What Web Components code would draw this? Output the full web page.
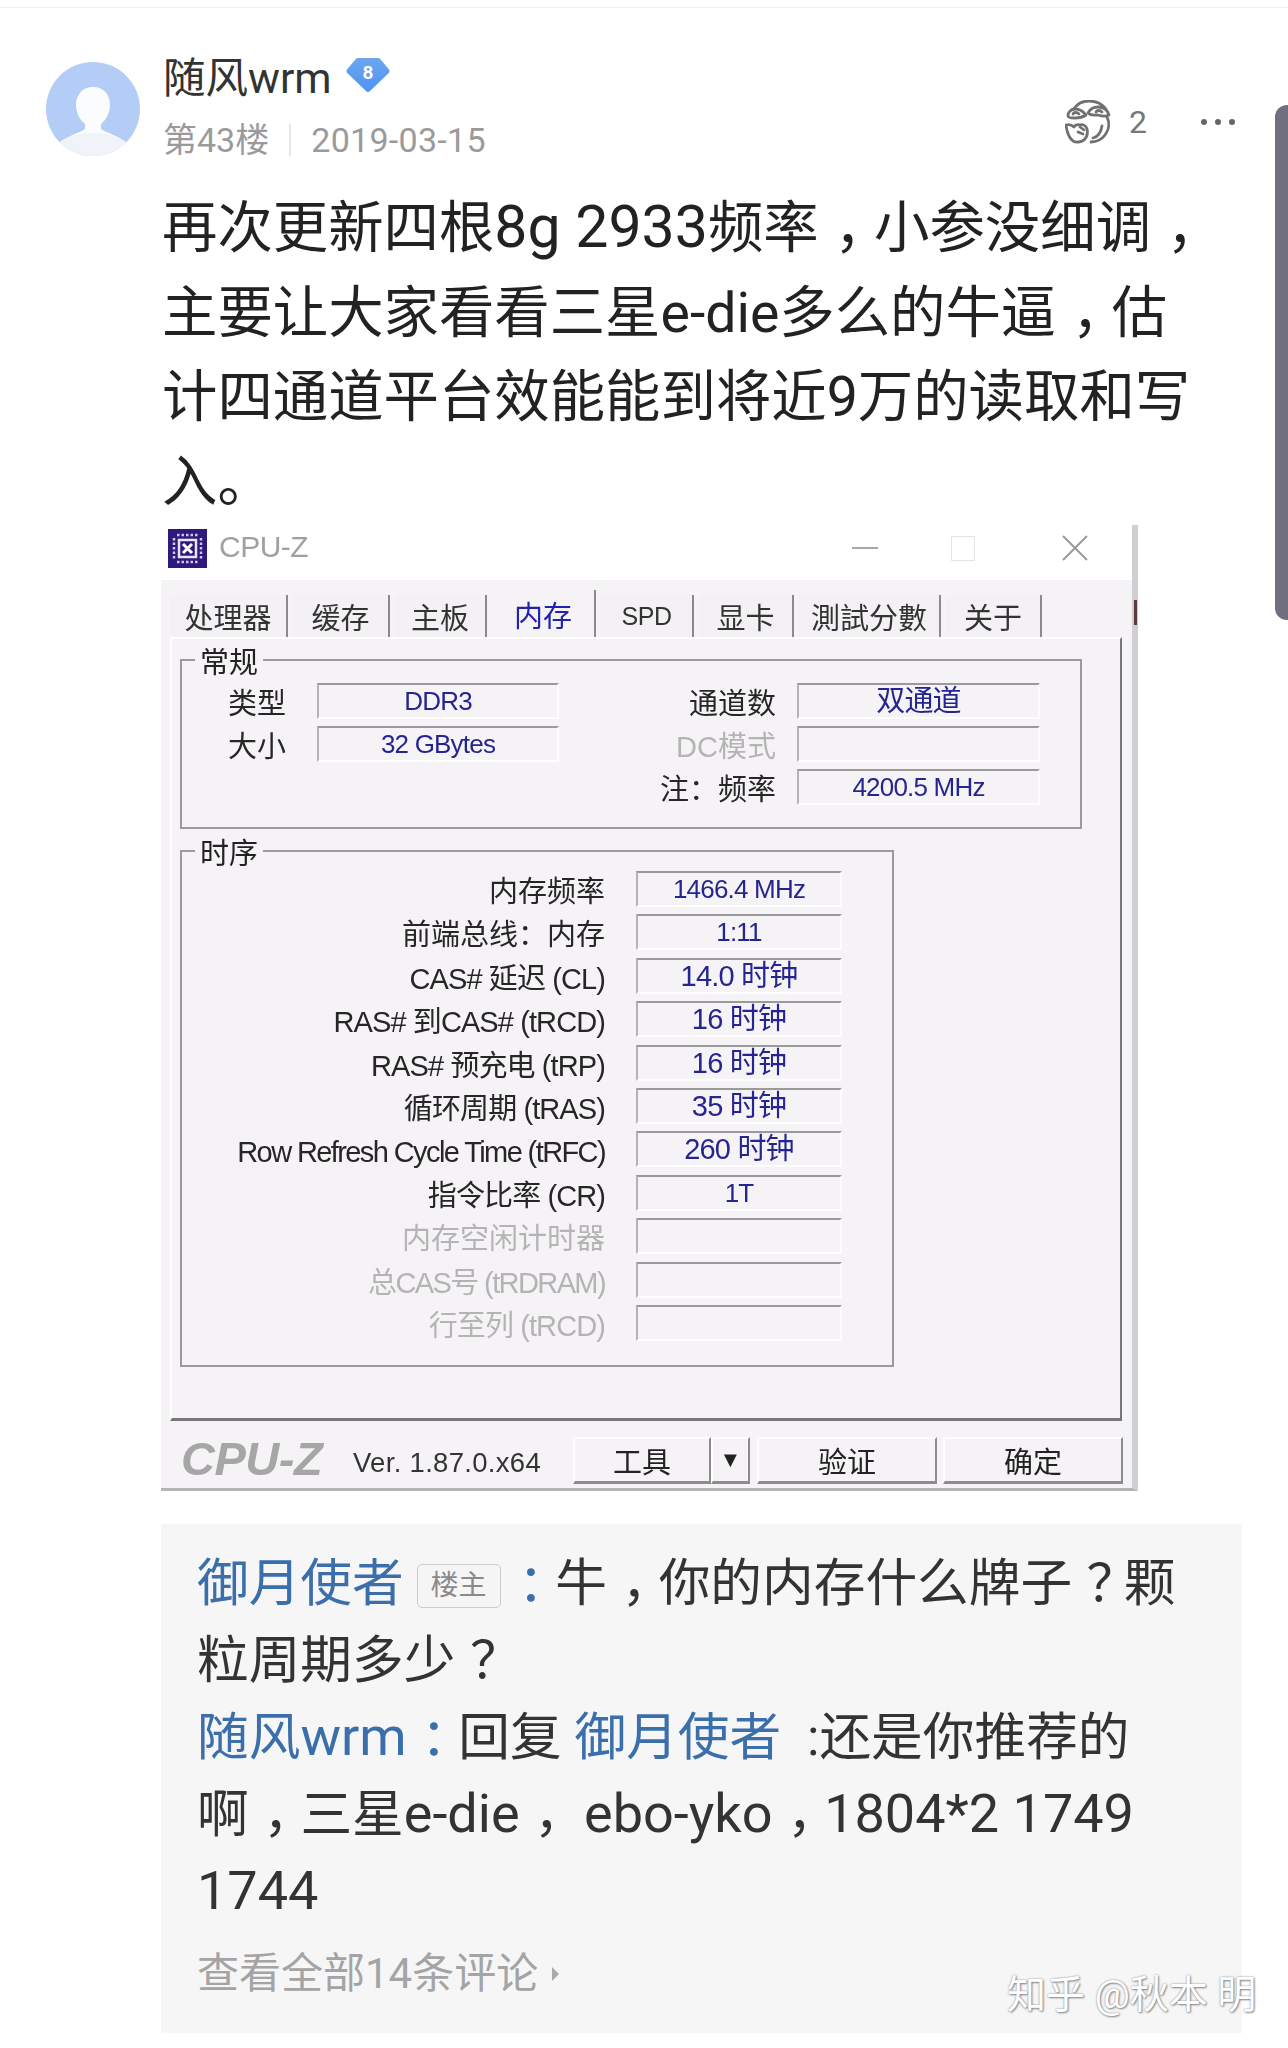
<!DOCTYPE html>
<html lang="zh">
<head>
<meta charset="utf-8">
<title>评论</title>
<style>
  html, body { margin: 0; background: #fff; }
  body { height: 2048px; overflow: hidden; font-family: Roboto, "Noto Sans CJK SC", sans-serif; }
  zh-comments a { color: #3b6fab; }
  .lat { font-size: 54px; line-height: 1; }
  zh-post-text .lat { font-size: 59px; }
</style>
</head>
<body>
<zh-page>
  <zh-post-header slot="header" name="随风wrm" level="8" floor="第43楼" date="2019-03-15" likes="2"></zh-post-header>
  <zh-post-text>再次更新四根<span class="lat">8g 2933</span>频率<zh-pun>，</zh-pun>小参没细调<zh-pun>，</zh-pun>主要让大家看看三星e-die多么的牛逼<zh-pun>，</zh-pun>估计四通道平台效能能到将近9万的读取和写入。</zh-post-text>
  <cz-window></cz-window>
  <zh-comments more="查看全部14条评论">
    <p><a>御月使者</a> <zh-tag>楼主</zh-tag><a><zh-pun>：</zh-pun></a>牛<zh-pun>，</zh-pun>你的内存什么牌子<zh-pun>？</zh-pun>颗粒周期多少<zh-pun>？</zh-pun></p>
    <p><a>随风<span class="lat">wrm</span><zh-pun>：</zh-pun></a>回复 <a>御月使者</a> &nbsp;:还是你推荐的<br>啊<zh-pun>，</zh-pun>三星<span class="lat">e-die</span><zh-pun>，</zh-pun> <span class="lat">ebo-yko</span><zh-pun>，</zh-pun><span class="lat">1804*2 1749 1744</span></p>
  </zh-comments>
</zh-page>

<script>
const CZ_FONT = `"Liberation Sans", "Noto Sans CJK SC", sans-serif`;

class ZhPage extends HTMLElement {
  constructor() {
    super();
    this.attachShadow({ mode: "open" });
    this.shadowRoot.innerHTML = `
      <style>
        :host { display: block; position: relative; height: 2048px; overflow: hidden; color: #222; }
        .rule { height: 8px; border-bottom: 1px solid #eeeeee; box-sizing: border-box; }
        .scroll {
          position: absolute; right: 0; top: 105px; width: 13px; height: 515px;
          background: #6f6f7d; border-radius: 12px 0 0 12px;
        }
        .mark {
          position: absolute; left: 1007px; top: 1970px; font-size: 39px; line-height: 50px;
          color: #fff; text-shadow: 0 0 2px #888, 1px 1px 2px #888; white-space: nowrap;
        }
      </style>
      <div class="rule"></div>
      <slot name="header"></slot>
      <slot></slot>
      <div class="scroll"></div>
      <div class="mark">知乎 @秋本 明</div>
    `;
  }
}

// centred full-width punctuation, the app's font does not sit it at the left of the cell
class ZhPun extends HTMLElement {
  constructor() {
    super();
    this.attachShadow({ mode: "open" });
    this.shadowRoot.innerHTML = `
      <style>
        :host { display: inline-block; transform: translateX(0.28em); }
      </style>
      <slot></slot>
    `;
  }
}

class ZhPostHeader extends HTMLElement {
  constructor() {
    super();
    this.attachShadow({ mode: "open" });
  }

  connectedCallback() {
    const name = this.getAttribute("name") || "";
    const level = this.getAttribute("level") || "";
    const floor = this.getAttribute("floor") || "";
    const date = this.getAttribute("date") || "";
    const likes = this.getAttribute("likes") || "";
    this.shadowRoot.innerHTML = `
      <style>
        :host { display: flex; padding: 46px 0 0 46px; height: 179px; box-sizing: border-box; }
        .avatar { width: 94px; height: 94px; margin-top: 8px; flex: none; }
        .who { margin-left: 23px; flex: none; }
        .name { display: flex; align-items: flex-start; font-size: 42.500px; line-height: 50px; color: #333; }
        .badge { margin: 3px 0 0 14px; width: 44px; height: 36px; }
        .meta { display: flex; align-items: center; font-size: 34px; line-height: 40px; color: #9a9a9a; margin-top: 16px; }
        .meta i { width: 2px; height: 32px; background: #e6e6e6; margin: 0 20px; }
        .meta .date { letter-spacing: 0.300px; }
        .actions { margin-left: auto; display: flex; align-items: center; height: 44px; margin-top: 46px; padding-right: 53px; color: #777; font-size: 32px; }
        .actions .count { margin-left: 18px; }
        .dots { margin-left: 54px; display: flex; gap: 8px; }
        .dots b { width: 6px; height: 6px; border-radius: 50%; background: #666; }
      </style>
      <svg class="avatar" viewBox="0 0 94 94">
        <defs><clipPath id="c"><circle cx="47" cy="47" r="47"/></clipPath></defs>
        <g clip-path="url(#c)">
          <rect width="94" height="94" fill="#b3cdf6"/>
          <path d="M47 25c-11 0-17 8-17 18 0 8 4 15 9 19v5c-6 4-18 7-26 14l34 13 34-13c-8-7-20-10-26-14v-5c5-4 9-11 9-19 0-10-6-18-17-18z" fill="#fbfcfe"/>
          <path d="M13 81c8-7 20-10 34-10s26 3 34 10v13H13z" fill="#f0f3f8"/>
        </g>
      </svg>
      <div class="who">
        <div class="name">
          <span>${name}</span>
          <svg class="badge" viewBox="0 0 44 36">
            <defs><linearGradient id="b" x1="0" y1="0" x2="0" y2="1"><stop offset="0" stop-color="#6ba6ee"/><stop offset="1" stop-color="#4e94f3"/></linearGradient></defs>
            <path d="M12 1h20a3 3 0 0 1 2.400 1.200l8.400 10a3 3 0 0 1 0 3.800L24 34a3 3 0 0 1-4 0L1.200 16a3 3 0 0 1 0-3.800l8.400-10A3 3 0 0 1 12 1z" fill="url(#b)"/>
            <text x="22" y="22" text-anchor="middle" font-family="Roboto, sans-serif" font-size="19" font-weight="700" fill="#fff">${level}</text>
          </svg>
        </div>
        <div class="meta"><span>${floor}</span><i></i><span class="date">${date}</span></div>
      </div>
      <div class="actions">
        <svg width="46" height="44" viewBox="0 0 46 44" fill="none" stroke="#707070" stroke-width="2.800" stroke-linecap="round" stroke-linejoin="round">
          <path d="M9 9C12 4 18 1 24 1c7 0 13 3 17 8"/>
          <path d="M42 17c3 6 2 13-2 18-3 4-8 7-14 7"/>
          <path d="M3 16c0-4 3-7 7-7 5 0 8 2 11 6-3 2-7 3-11 3-2 0-7 0-7-2z"/>
          <path d="M23 13c2-4 6-6 10-6 5 0 10 3 11 8-4 2-8 1-11 0-3 0-7 1-10-2z"/>
          <path d="M8 14c1-2 4-2 6 0M31 12c1-2 4-2 6 0"/>
          <path d="M1 25c3-1 6 0 8 2 1-2 4-3 6-2 3-1 6 1 7 4 1 4 0 8-3 11-3 2-8 3-11 1-4-3-6-8-7-16z"/>
          <path d="M15 27l4 3M13 32l5 2"/>
          <path d="M28 38c5-1 8-6 9-12"/>
        </svg>
        <span class="count">${likes}</span>
        <div class="dots"><b></b><b></b><b></b></div>
      </div>
    `;
  }
}

class ZhPostText extends HTMLElement {
  constructor() {
    super();
    this.attachShadow({ mode: "open" });
    this.shadowRoot.innerHTML = `
      <style>
        :host {
          display: block; margin: 0 70px 0 162px; height: 338px; box-sizing: border-box;
          font-size: 55.400px; line-height: 84.500px; color: #222;
        }
      </style>
      <slot></slot>
    `;
  }
}

class CzTab extends HTMLElement {
  constructor() {
    super();
    this.attachShadow({ mode: "open" });
    this.shadowRoot.innerHTML = `
      <style>
        :host {
          display: flex; justify-content: center; align-items: center; height: 42px; box-sizing: border-box;
          margin-right: 5px; background: #f3f1f4; border-right: 2px solid #8a8a8a;
          font-size: 29px; color: #333; white-space: nowrap;
        }
        :host([active]) { height: 47px; background: #f6f3f7; color: #2222b0; }
      </style>
      <slot></slot>
    `;
  }
}

class CzGroup extends HTMLElement {
  constructor() {
    super();
    this.attachShadow({ mode: "open" });
    this.shadowRoot.innerHTML = `
      <style>
        :host { display: block; position: relative; border: 2px solid #9b9b9f; box-sizing: border-box; }
        .title {
          position: absolute; left: 13px; top: -17px; padding: 0 5px; background: #f6f3f7;
          font-size: 29px; line-height: 38px; color: #222;
        }
      </style>
      <span class="title"></span>
      <slot></slot>
    `;
    this.shadowRoot.querySelector(".title").textContent = this.getAttribute("title") || "";
  }
}

class CzField extends HTMLElement {
  constructor() {
    super();
    this.attachShadow({ mode: "open" });
  }

  connectedCallback() {
    const label = this.getAttribute("label") || "";
    const value = this.getAttribute("value") || "";
    this.shadowRoot.innerHTML = `
      <style>
        :host { display: flex; align-items: center; height: 36px; line-height: 36px; white-space: nowrap; font-size: 29px; }
        .label { width: var(--cz-label); flex: none; text-align: right; color: #262626; letter-spacing: var(--cz-spacing, 0); padding-top: 3px; height: 33px; }
        :host([off]) .label { color: #b4b4b4; }
        .value {
          width: var(--cz-value); height: 36px; box-sizing: border-box; margin-left: var(--cz-gap); flex: none;
          border-top: 2px solid #9a9a9a; border-left: 2px solid #b4b4b4;
          border-right: 2px solid #fdfdfd; border-bottom: 2px solid #fdfdfd;
          display: flex; align-items: center; justify-content: center;
          color: #25258f; font-size: 26px; letter-spacing: -0.800px;
        }
        :host([wide]) .value { font-size: 29px; }
      </style>
      <div class="label">${label}</div>
      <div class="value">${value}</div>
    `;
  }
}

class CzButton extends HTMLElement {
  constructor() {
    super();
    this.attachShadow({ mode: "open" });
    this.shadowRoot.innerHTML = `
      <style>
        :host {
          display: flex; align-items: center; justify-content: center; height: 47px; box-sizing: border-box;
          background: #f6f3f7; border-top: 2px solid #fdfdfd; border-left: 2px solid #fdfdfd;
          border-right: 2px solid #8c8c8c; border-bottom: 3px solid #8c8c8c;
          font-size: 29px; color: #222;
        }
      </style>
      <slot></slot>
    `;
  }
}

class CzWindow extends HTMLElement {
  constructor() {
    super();
    this.attachShadow({ mode: "open" });
    this.shadowRoot.innerHTML = `
      <style>
        :host {
          display: block; position: relative; margin-left: 161px; width: 977px; height: 966px; box-sizing: border-box;
          border-right: 6px solid #cfcfd2; border-bottom: 3px solid #b4b4b4; background: #f6f3f7;
          font-family: ${CZ_FONT}; font-size: 29px; color: #222; filter: blur(0.4px);
        }
        .title { height: 55px; background: #fff; display: flex; align-items: flex-start; padding: 4px 0 0 7px; box-sizing: border-box; }
        .chip { width: 39px; height: 39px; background: #2e1a7c; display: block; flex: none; }
        .title span { margin-left: 12px; font-size: 30px; line-height: 36px; color: #a0a0a0; letter-spacing: -0.500px; }
        .controls { margin-left: auto; display: flex; align-items: center; height: 34px; padding: 2px 43px 0 0; }
        .min { width: 26px; height: 2px; background: #a8a8a8; }
        .max { width: 22px; height: 23px; border: 1px solid #e4e4e4; margin: 0 86px 0 73px; }
        .tabs { display: flex; align-items: flex-end; height: 57px; padding-left: 9px; }
        .tabs .spd { font-size: 25px; letter-spacing: -0.500px; }
        .panel {
          margin-left: 9px; width: 952px; height: 784px; box-sizing: border-box;
          border-top: 2px solid #fdfdfd; border-left: 2px solid #fdfdfd;
          border-right: 2px solid #777; border-bottom: 3px solid #777;
          padding: 20px 0 0 8px;
        }
        .general { width: 902px; height: 170px; }
        .general .rows { display: grid; grid-template-columns: 378px 1fr; padding-top: 22px; row-gap: 7px; }
        .timing { width: 714px; height: 517px; margin-top: 21px; padding-top: 19px; }
        .timing cz-field { margin-bottom: 7.400px; --cz-label: 423px; --cz-value: 206px; --cz-gap: 31px; --cz-spacing: -0.900px; }
        .timing cz-field.cjk { --cz-spacing: 0; }
        .timing cz-field.long { --cz-spacing: -1.600px; }
        .general cz-field.l { --cz-label: 104px; --cz-value: 242px; --cz-gap: 31px; }
        .general cz-field.r { --cz-label: 216px; --cz-value: 243px; --cz-gap: 21px; }
        .foot { display: flex; align-items: flex-start; height: 66px; padding: 16px 0 0 20px; box-sizing: border-box; }
        .logo { font-size: 47px; line-height: 50px; margin-top: -3px; font-weight: 700; font-style: italic; color: #a6a6a6; letter-spacing: -0.500px; width: 172px; flex: none; }
        .ver { font-size: 27.500px; line-height: 30px; margin-top: 11px; color: #333; width: 220px; flex: none; letter-spacing: 0.300px; }
        .tool { width: 138px; } .drop { width: 39px; font-size: 22px; margin-right: 7px; }
        .btn { width: 180px; margin-right: 6px; }
        .edge { position: absolute; right: -5px; top: 75px; width: 3px; height: 25px; background: #5a3c3c; }
      </style>
      <div class="title">
        <svg class="chip" viewBox="0 0 39 39">
          <rect width="39" height="39" fill="#2e1a7c"/>
          <rect x="11" y="11" width="17" height="17" fill="none" stroke="#e8e4f8" stroke-width="2.500"/>
          <path d="M15 15l9 9M24 15l-9 9" stroke="#fff" stroke-width="3"/>
          <path d="M9 6h21M9 33h21M6 9v21M33 9v21" stroke="#cfc8ee" stroke-width="2.500" stroke-dasharray="2.500 2"/>
        </svg>
        <span>CPU-Z</span>
        <div class="controls">
          <div class="min"></div>
          <div class="max"></div>
          <svg width="28" height="26" viewBox="0 0 28 26"><path d="M2 1l24 24M26 1L2 25" stroke="#9a9a9a" stroke-width="2" fill="none"/></svg>
        </div>
      </div>
      <div class="tabs">
        <cz-tab style="width:118px">处理器</cz-tab>
        <cz-tab style="width:97px">缓存</cz-tab>
        <cz-tab style="width:92px">主板</cz-tab>
        <cz-tab active style="width:104px">内存</cz-tab>
        <cz-tab class="spd" style="width:93px">SPD</cz-tab>
        <cz-tab style="width:95px">显卡</cz-tab>
        <cz-tab style="width:142px">測試分數</cz-tab>
        <cz-tab style="width:96px">关于</cz-tab>
      </div>
      <div class="edge"></div>
      <div class="panel">
        <cz-group class="general" title="常规">
          <div class="rows">
            <cz-field class="l" label="类型" value="DDR3"></cz-field>
            <cz-field class="r" wide label="通道数" value="双通道"></cz-field>
            <cz-field class="l" label="大小" value="32 GBytes"></cz-field>
            <cz-field class="r" off label="DC模式"></cz-field>
            <div></div>
            <cz-field class="r" label="注：频率" value="4200.5 MHz"></cz-field>
          </div>
        </cz-group>
        <cz-group class="timing" title="时序">
          <cz-field class="cjk" label="内存频率" value="1466.4 MHz"></cz-field>
          <cz-field class="cjk" label="前端总线：内存" value="1:11"></cz-field>
          <cz-field wide label="CAS# 延迟 (CL)" value="14.0 时钟"></cz-field>
          <cz-field wide label="RAS# 到CAS# (tRCD)" value="16 时钟"></cz-field>
          <cz-field wide label="RAS# 预充电 (tRP)" value="16 时钟"></cz-field>
          <cz-field wide label="循环周期 (tRAS)" value="35 时钟"></cz-field>
          <cz-field class="long" wide label="Row Refresh Cycle Time (tRFC)" value="260 时钟"></cz-field>
          <cz-field label="指令比率 (CR)" value="1T"></cz-field>
          <cz-field class="cjk" off label="内存空闲计时器"></cz-field>
          <cz-field class="long" off label="总CAS号 (tRDRAM)"></cz-field>
          <cz-field off label="行至列 (tRCD)"></cz-field>
        </cz-group>
      </div>
      <div class="foot">
        <div class="logo">CPU-Z</div>
        <div class="ver">Ver. 1.87.0.x64</div>
        <cz-button class="tool">工具</cz-button>
        <cz-button class="drop">▼</cz-button>
        <cz-button class="btn">验证</cz-button>
        <cz-button class="btn" style="margin-right:0">确定</cz-button>
      </div>
    `;
  }
}

class ZhTag extends HTMLElement {
  constructor() {
    super();
    this.attachShadow({ mode: "open" });
    this.shadowRoot.innerHTML = `
      <style>
        :host {
          display: inline-flex; align-items: center; justify-content: center; vertical-align: 6px;
          width: 84px; height: 44px; box-sizing: border-box; margin-right: 3px;
          border: 1px solid #cccccc; border-radius: 5px; background: #f5f5f5;
          font-size: 28px; line-height: 1; color: #8a8a8a;
        }
      </style>
      <slot></slot>
    `;
  }
}

class ZhComments extends HTMLElement {
  constructor() {
    super();
    this.attachShadow({ mode: "open" });
    const more = this.getAttribute("more") || "";
    this.shadowRoot.innerHTML = `
      <style>
        :host {
          display: block; margin: 33px 46px 0 161px; height: 509px; box-sizing: border-box;
          padding: 21px 60px 0 36px; background: #f6f6f6;
          font-size: 51.700px; line-height: 77px; color: #333;
        }
        ::slotted(p) { margin: 0; }
        .more { margin-top: 16px; font-size: 42px; line-height: 56px; color: #a4a4a4; display: flex; align-items: center; }
        .more i { margin-left: 14px; border-left: 7px solid #aaa; border-top: 7px solid transparent; border-bottom: 7px solid transparent; }
      </style>
      <slot></slot>
      <div class="more"><span>${more}</span><i></i></div>
    `;
  }
}

customElements.define("zh-page", ZhPage);
customElements.define("zh-pun", ZhPun);
customElements.define("zh-post-header", ZhPostHeader);
customElements.define("zh-post-text", ZhPostText);
customElements.define("cz-tab", CzTab);
customElements.define("cz-group", CzGroup);
customElements.define("cz-field", CzField);
customElements.define("cz-button", CzButton);
customElements.define("cz-window", CzWindow);
customElements.define("zh-tag", ZhTag);
customElements.define("zh-comments", ZhComments);
</script>
</body>
</html>
